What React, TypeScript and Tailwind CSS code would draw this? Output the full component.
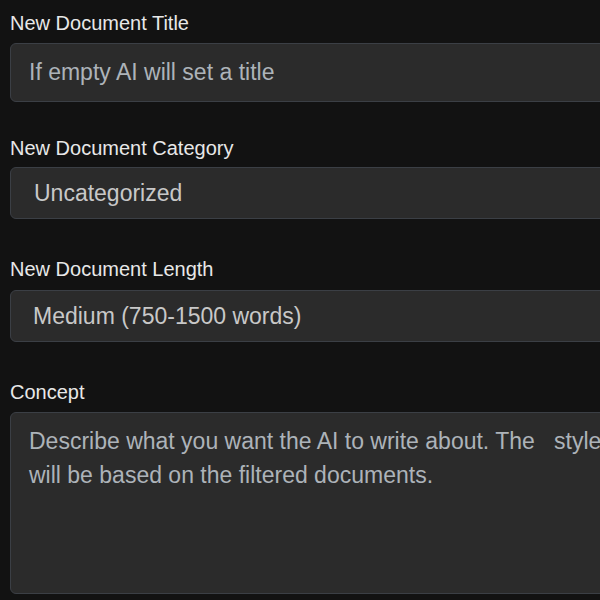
import React from "react";

export default function App() {
  return (
    <div className="w-[600px] h-[600px] overflow-hidden bg-[#121212] font-['Liberation_Sans',Arial,sans-serif]">
      <div className="w-[640px] px-[10px] flex flex-col">
        <label className="mt-[11px] text-[20px] leading-[24px] text-[#e8e8e8]">New Document Title</label>
        <input
          className="mt-[8px] h-[59px] w-full rounded-[6px] border border-[#3b3f45] bg-[#2b2b2b] px-[18px] text-[23px] text-[#c4c4c4] outline-none placeholder:text-[#adb3b9]"
          placeholder="If empty AI will set a title"
        />

        <label className="mt-[34px] text-[20px] leading-[24px] text-[#e8e8e8]">New Document Category</label>
        <div className="mt-[7px] h-[52px] w-full rounded-[6px] border border-[#3b3f45] bg-[#2b2b2b] px-[23px] flex items-center text-[23px] text-[#c8c8c8]">
          Uncategorized
        </div>

        <label className="mt-[38px] text-[20px] leading-[24px] text-[#e8e8e8]">New Document Length</label>
        <div className="mt-[9px] h-[52px] w-full rounded-[6px] border border-[#3b3f45] bg-[#2b2b2b] px-[22px] flex items-center text-[23px] text-[#c8c8c8]">
          Medium (750-1500 words)
        </div>

        <label className="mt-[38px] text-[20px] leading-[24px] text-[#e8e8e8]">Concept</label>
        <textarea
          className="mt-[8px] h-[182px] w-full resize-none rounded-[6px] border border-[#3b3f45] bg-[#2b2b2b] pl-[18px] pr-[14px] pt-[11px] text-[23px] leading-[34px] text-[#c4c4c4] outline-none placeholder:text-[#adb3b9]"
          placeholder={"Describe what you want the AI to write about. The   style will be based on the filtered documents."}
        />
      </div>
    </div>
  );
}
